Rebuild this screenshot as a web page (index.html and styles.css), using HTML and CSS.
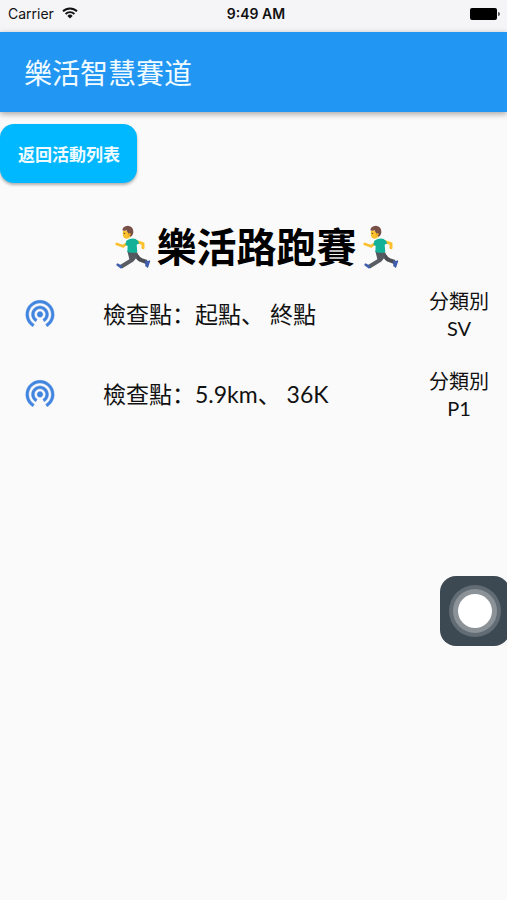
FILE: index.html
```html
<!DOCTYPE html>
<html lang="zh-Hans">
<head>
<meta charset="utf-8">
<meta name="viewport" content="width=device-width, initial-scale=1">
<title>樂活智慧賽道</title>
<link rel="stylesheet" href="styles.css">
</head>
<body>
<svg class="defs" aria-hidden="true">
  <symbol id="runner" viewBox="12 10 114 138">
    <path d="M70 100 Q74 112 66 118 L33 138" fill="none" stroke="#5a5d63" stroke-width="12" stroke-linejoin="round"/>
    <path d="M76 98 Q84 116 96 119 L110 124" fill="none" stroke="#4b4d52" stroke-width="12" stroke-linejoin="round"/>
    <path d="M52 91 L79 93 L84 105 L70 122 L58 116 Z" fill="#55585e"/>
    <path d="M23 128 L37 136 Q37 142 33 144 L19 134 Q18 130 23 128Z" fill="#3f5fae"/>
    <path d="M105 119 Q112 123 119 119 Q123 122 118 129 L114 142 L106 137Z" fill="#3f5fae"/>
    <path d="M54 66 L39 77 L20 70" fill="none" stroke="#fbc02d" stroke-width="8" stroke-linecap="round" stroke-linejoin="round"/>
    <path d="M80 63 L99 69 L99 81" fill="none" stroke="#fbc02d" stroke-width="9" stroke-linecap="round" stroke-linejoin="round"/>
    <path d="M49 60 Q64 50 77 55 Q86 60 88 68 L80 72 L82 95 Q68 99 52 93 L53 76 L46 72Z" fill="#12b198"/>
    <path d="M39 29 Q37 45 42 52 Q53 57 61 49 L66 33Z" fill="#fbc02d"/>
    <path d="M37 29 Q38 16 54 15 Q71 17 70 36 Q69 44 62 49 L57 41 Q52 35 50 29 Q43 31 37 29Z" fill="#795046"/>
    <circle cx="58" cy="41" r="4" fill="#e6a61e"/>
    <circle cx="43" cy="38" r="2" fill="#4b352f"/>
  </symbol>
  <symbol id="beacon" viewBox="0 0 24 24">
    <path d="M12 11c-1.1 0-2 .9-2 2s.9 2 2 2 2-.9 2-2-.9-2-2-2zm6 2c0-3.31-2.69-6-6-6s-6 2.69-6 6c0 2.22 1.21 4.15 3 5.19l1-1.74c-1.19-.7-2-1.97-2-3.45 0-2.21 1.79-4 4-4s4 1.79 4 4c0 1.48-.81 2.75-2 3.45l1 1.74c1.79-1.04 3-2.97 3-5.19zM12 3C6.48 3 2 7.48 2 13c0 3.7 2.01 6.92 4.99 8.65l1-1.73C5.61 18.53 4 15.96 4 13c0-4.42 3.58-8 8-8s8 3.58 8 8c0 2.96-1.61 5.53-4 6.92l1 1.73c2.99-1.73 5-4.95 5-8.65 0-5.52-4.48-10-10-10z" fill="#4285e0" stroke="#4285e0" stroke-width=".3"/>
  </symbol>
</svg>

<div class="status">
  <div class="carrier">
    <span>Carrier</span>
    <svg class="wifi" viewBox="0 0 16 12" aria-hidden="true">
      <path d="M1 4.3a10 10 0 0 1 14 0M3.6 7a6.2 6.2 0 0 1 8.8 0" fill="none" stroke="#111" stroke-width="1.9"/>
      <path d="M8 11.5 5.4 8.9a3.7 3.7 0 0 1 5.2 0z" fill="#111"/>
    </svg>
  </div>
  <time class="clock">9:49 AM</time>
  <svg class="battery" viewBox="0 0 30 12" aria-hidden="true">
    <rect width="27" height="12" rx="2"/>
    <path d="M28 4q2 0 2 2t-2 2z" fill="#555"/>
  </svg>
</div>

<header class="bar">
  <div class="bar-title">樂活智慧賽道</div>
</header>

<main>
  <button class="back" type="button">返回活動列表</button>
  <h1 class="title">
    <svg class="runner" aria-hidden="true"><use href="#runner"/></svg>
    <span>樂活路跑賽</span>
    <svg class="runner" aria-hidden="true"><use href="#runner"/></svg>
  </h1>
  <ul class="list">
    <li class="row">
      <svg class="beacon" aria-hidden="true"><use href="#beacon"/></svg>
      <span class="points">檢查點：起點、 終點</span>
      <span class="group">分類別<br>SV</span>
    </li>
    <li class="row">
      <svg class="beacon" aria-hidden="true"><use href="#beacon"/></svg>
      <span class="points">檢查點：5.9km、 36K</span>
      <span class="group">分類別<br>P1</span>
    </li>
  </ul>
</main>

<button class="assist" type="button" aria-label="AssistiveTouch"><span class="assist-dot"></span></button>
</body>
</html>
```
FILE: styles.css
```css
* {
  box-sizing: border-box;
}

body {
  margin: 0;
  min-height: 100vh;
  background: #fafafa;
  color: #111;
  font-family: Lato, "Noto Sans CJK SC", sans-serif;
}

.defs {
  display: none;
}

.status {
  display: grid;
  grid-template-columns: 1fr auto 1fr;
  align-items: center;
  height: 32px;
  padding: 0 7px 5px 8px;
  background: #f5f5f8;
  font-family: Inter, sans-serif;
  font-size: 14px;
}

.carrier {
  display: flex;
  align-items: center;
  gap: 8px;
}

.wifi {
  width: 16px;
  height: 12px;
  margin-bottom: 2px;
}

.clock {
  padding-left: 4px;
  font-weight: 600;
}

.battery {
  justify-self: end;
  width: 30px;
  height: 12px;
}

.bar {
  display: flex;
  align-items: center;
  height: 80px;
  padding: 2px 24px 0;
  background: #2196f3;
  box-shadow: 0 2px 6px rgba(0, 0, 0, 0.35);
}

.bar-title {
  color: #f0fbff;
  font-size: 28px;
  line-height: 40px;
}

main {
  padding-top: 12px;
}

.back {
  display: block;
  height: 59px;
  padding: 0 17px 0 18px;
  border: 0;
  border-radius: 14px;
  background: #00b8ff;
  box-shadow: 0 2px 3px rgba(0, 0, 0, 0.3);
  color: #f0fbff;
  font: bold 17px "Noto Sans CJK SC", sans-serif;
}

.title {
  display: flex;
  justify-content: center;
  align-items: center;
  gap: 5px;
  height: 64px;
  margin: 32px 0 -4px;
  padding-left: 6px;
  color: #000;
  font-size: 40px;
  line-height: 48px;
}

.runner {
  width: 38px;
  height: 46px;
}

.list {
  margin: 0;
  padding: 0;
  list-style: none;
}

.row {
  display: flex;
  align-items: center;
  height: 80px;
  padding: 0 18px 0 23px;
}

.beacon {
  width: 34px;
  height: 34px;
  margin: 0 46px 4px 0;
}

.points {
  flex: 1;
  padding-bottom: 2px;
  font-size: 23px;
  line-height: 32px;
}

.group {
  font-size: 20px;
  line-height: 27px;
  text-align: center;
}

.assist {
  position: fixed;
  top: 576px;
  right: -3px;
  display: grid;
  place-items: center;
  width: 70px;
  height: 70px;
  padding: 0;
  border: 0;
  border-radius: 16px;
  background: #3c4852;
}

.assist-dot {
  width: 34px;
  height: 34px;
  border-radius: 50%;
  background: #fff;
  box-shadow: 0 0 0 5px #8b9298, 0 0 0 9px #626c74;
}
```
